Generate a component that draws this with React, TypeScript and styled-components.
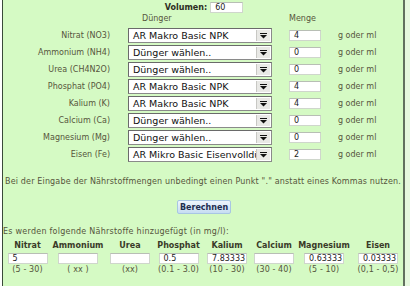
import styled, { createGlobalStyle } from "styled-components";

const GlobalStyle = createGlobalStyle`
  html, body {
    margin: 0;
    padding: 0;
    background: #ffffff;
  }
  body {
    font-family: "DejaVu Sans", Verdana, sans-serif;
    font-size: 8px;
    color: #55553c;
  }
`;

const Panel = styled.div`
  margin-left: 2px;
  width: 400px;
  height: 286px;
  background: #d5fac4;
  border-left: 1px solid #3a4a3a;
  border-right: 2px solid #62705f;
  box-shadow: 5px 0 0 #e6f8de;
`;

const VolumeRow = styled.div`
  display: flex;
  justify-content: center;
  align-items: center;
  gap: 3px;
  height: 14px;
`;

const VolumeLabel = styled.span`
  font-weight: bold;
  color: #2d2d22;
  margin-left: 2px;
`;

const TextBox = styled.div<{ $w: number }>`
  box-sizing: border-box;
  width: ${(p) => p.$w}px;
  height: 11px;
  background: #ffffff;
  border: 1px solid #cfd6cc;
  border-top-color: #b8beb5;
  color: #222;
  font-size: 8px;
  line-height: 9px;
  padding-left: 4px;
  white-space: nowrap;
  overflow: hidden;
`;

const FormGrid = styled.div`
  display: grid;
  grid-template-columns: 108px 144px 32px 1fr;
  column-gap: 17px;
  row-gap: 2px;
  align-items: center;
`;

const ColHead = styled.div<{ $indent?: number }>`
  height: 10px;
  line-height: 10px;
  padding-left: ${(p) => p.$indent ?? 0}px;
  margin-bottom: 2px;
`;

const Label = styled.div`
  text-align: right;
  padding-right: 1px;
  white-space: nowrap;
`;

const SelectBox = styled.div`
  box-sizing: border-box;
  height: 15px;
  display: flex;
  align-items: stretch;
  background: #ffffff;
  border: 1px solid #8a8a8a;
  border-top-color: #6a6a6a;
  border-left-color: #6a6a6a;
  padding: 1px;
`;

const SelectText = styled.span`
  flex: 1;
  font-size: 9.5px;
  line-height: 12px;
  color: #111;
  padding-left: 3px;
  white-space: nowrap;
  overflow: hidden;
`;

const ArrowButton = styled.span`
  width: 13px;
  display: flex;
  align-items: center;
  justify-content: center;
  background: #e9e9e6;
  border-left: 1px solid #c8c8c4;
`;

const Unit = styled.span`
  white-space: nowrap;
`;

const Note = styled.p`
  margin: 15px 0 0;
  text-align: center;
  line-height: 10px;
  letter-spacing: 0.16px;
  white-space: nowrap;
`;

const ButtonRow = styled.div`
  display: flex;
  justify-content: center;
  margin-top: 13px;
`;

const CalcButton = styled.button`
  box-sizing: border-box;
  height: 14px;
  width: 54px;
  padding: 0;
  margin-left: 2px;
  font-family: "DejaVu Sans", Verdana, sans-serif;
  font-size: 8px;
  font-weight: bold;
  color: #1d2d4f;
  background: linear-gradient(#eef5fc, #c6ddf2);
  border: 1px solid #a8c6e3;
  border-radius: 2px;
`;

const Intro = styled.p`
  margin: 13px 0 0;
  line-height: 10px;
  letter-spacing: 0.25px;
  white-space: nowrap;
`;

const ResultGrid = styled.div`
  display: grid;
  grid-template-columns: 49px 52px 52px 45px 52px 42px 58px 50px;
  grid-template-rows: 10px 14px 10px;
  margin-top: 4px;
  justify-items: center;
  align-items: center;
`;

const ResultHead = styled.div`
  font-weight: bold;
  color: #3a3a28;
  white-space: nowrap;
  line-height: 10px;
`;

const Range = styled.div`
  white-space: nowrap;
  line-height: 10px;
  letter-spacing: 0.1px;
`;

function Arrow() {
  return (
    <svg width="7" height="6" viewBox="0 0 7 6">
      <rect x="0" y="0" width="7" height="1" fill="#111" />
      <path d="M0 2 H7 L3.5 5.5 Z" fill="#111" />
    </svg>
  );
}

const nutrients = [
  { label: "Nitrat (NO3)", choice: "AR Makro Basic NPK", amount: "4" },
  { label: "Ammonium (NH4)", choice: "Dünger wählen..", amount: "0" },
  { label: "Urea (CH4N2O)", choice: "Dünger wählen..", amount: "0" },
  { label: "Phosphat (PO4)", choice: "AR Makro Basic NPK", amount: "4" },
  { label: "Kalium (K)", choice: "AR Makro Basic NPK", amount: "4" },
  { label: "Calcium (Ca)", choice: "Dünger wählen..", amount: "0" },
  { label: "Magnesium (Mg)", choice: "Dünger wählen..", amount: "0" },
  { label: "Eisen (Fe)", choice: "AR Mikro Basic Eisenvolldünger", amount: "2" },
];

const results = [
  { name: "Nitrat", value: "5", range: "(5 - 30)" },
  { name: "Ammonium", value: "", range: "( xx )" },
  { name: "Urea", value: "", range: "(xx)" },
  { name: "Phosphat", value: "0.5", range: "(0.1 - 3.0)" },
  { name: "Kalium", value: "7.83333", range: "(10 - 30)" },
  { name: "Calcium", value: "", range: "(30 - 40)" },
  { name: "Magnesium", value: "0.63333", range: "(5 - 10)" },
  { name: "Eisen", value: "0.03333", range: "(0,1 - 0,5)" },
];

function Row({ label, choice, amount }: { label: string; choice: string; amount: string }) {
  return (
    <>
      <Label>{label}</Label>
      <SelectBox>
        <SelectText>{choice}</SelectText>
        <ArrowButton>
          <Arrow />
        </ArrowButton>
      </SelectBox>
      <TextBox $w={32}>{amount}</TextBox>
      <Unit>g oder ml</Unit>
    </>
  );
}

export default function App() {
  return (
    <>
      <GlobalStyle />
      <Panel>
        <VolumeRow>
          <VolumeLabel>Volumen:</VolumeLabel>
          <TextBox $w={33}>60</TextBox>
        </VolumeRow>

        <FormGrid>
          <span />
          <ColHead $indent={14}>Dünger</ColHead>
          <ColHead>Menge</ColHead>
          <span />
          {nutrients.map((n) => (
            <Row key={n.label} {...n} />
          ))}
        </FormGrid>

        <Note>
          Bei der Eingabe der Nährstoffmengen unbedingt einen Punkt "." anstatt
          eines Kommas nutzen.
        </Note>

        <ButtonRow>
          <CalcButton>Berechnen</CalcButton>
        </ButtonRow>

        <Intro>Es werden folgende Nährstoffe hinzugefügt (in mg/l):</Intro>

        <ResultGrid>
          {results.map((r) => (
            <ResultHead key={r.name}>{r.name}</ResultHead>
          ))}
          {results.map((r) => (
            <TextBox key={r.name} $w={40}>
              {r.value}
            </TextBox>
          ))}
          {results.map((r) => (
            <Range key={r.name}>{r.range}</Range>
          ))}
        </ResultGrid>
      </Panel>
    </>
  );
}
